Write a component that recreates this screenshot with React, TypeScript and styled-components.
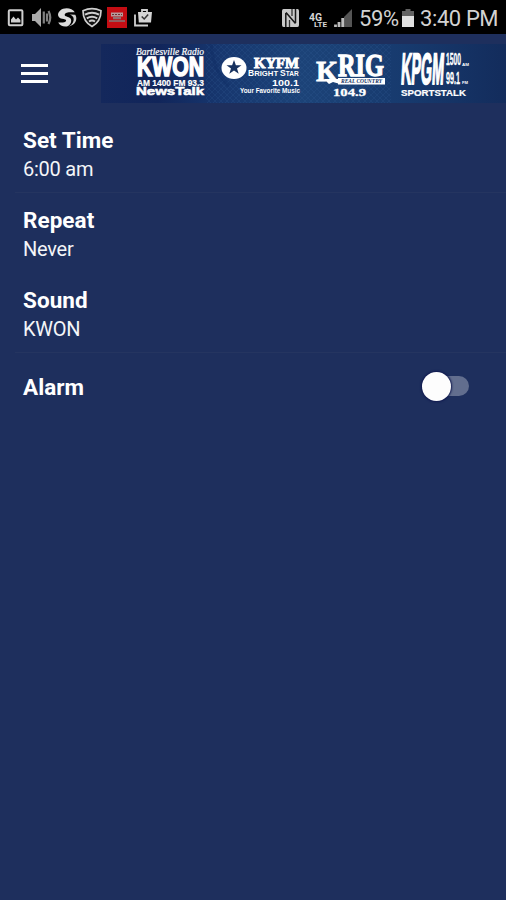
import React, { useState } from "react";
import styled, { createGlobalStyle } from "styled-components";

const GlobalStyle = createGlobalStyle`
  * { box-sizing: border-box; }
  html, body { margin: 0; padding: 0; background: #1e2f5d; }
  body { font-family: Roboto, "Liberation Sans", sans-serif; }
`;

const Screen = styled.div`
  width: 506px;
  height: 900px;
  display: flex;
  flex-direction: column;
  background: #1e2f5d;
  overflow: hidden;
`;

const StatusBar = styled.div`
  height: 34px;
  flex: none;
  display: flex;
  justify-content: space-between;
  background: #000;
  color: #d2d2d2;
`;

const StatusGroup = styled.div`
  display: flex;
  align-items: flex-start;
  padding-top: 6px;
`;

const Icon = styled.svg<{ $gap?: number }>`
  display: block;
  flex: none;
  height: 22px;
  margin-left: ${(p) => p.$gap ?? 0}px;
`;

const StatusText = styled.span<{ $width: number; $gap: number }>`
  width: ${(p) => p.$width}px;
  margin-left: ${(p) => p.$gap}px;
  font-size: 22px;
  letter-spacing: -0.4px;
  line-height: 26px;
  white-space: nowrap;
`;

const Header = styled.header`
  height: 79px;
  flex: none;
  display: flex;
  align-items: flex-start;
  padding-top: 10px;
`;

const MenuButton = styled.button`
  width: 101px;
  height: 59px;
  padding: 0 0 0 21px;
  border: 0;
  background: none;
  display: flex;
  align-items: center;
`;

const MenuLines = styled.span`
  width: 27px;
  height: 19px;
  border-top: 3px solid #fff;
  border-bottom: 3px solid #fff;
  display: flex;
  align-items: center;
  &::after {
    content: "";
    width: 100%;
    height: 3px;
    background: #fff;
  }
`;

const Banner = styled.svg`
  display: block;
  width: 405px;
  height: 59px;
`;

const List = styled.main`
  display: flex;
  flex-direction: column;
  margin-left: 15px;
`;

const Row = styled.section<{ $height: number; $divider?: boolean }>`
  height: ${(p) => p.$height}px;
  display: flex;
  justify-content: space-between;
  padding: 13px 37px 0 8px;
  border-bottom: 1px solid ${(p) => (p.$divider ? "#253560" : "transparent")};
`;

const Label = styled.div`
  font-size: 22.5px;
  line-height: 28px;
  font-weight: 700;
  letter-spacing: 0.05px;
  color: #fff;
`;

const Value = styled.div`
  margin-top: 1px;
  font-size: 20px;
  line-height: 28px;
  letter-spacing: -0.25px;
  color: #f4f5f8;
`;

const AlarmLabel = styled(Label)`
  padding-top: 7px;
`;

const Switch = styled.button<{ $on: boolean }>`
  width: 47px;
  height: 30px;
  margin-top: 5px;
  padding: 0;
  border: 0;
  display: flex;
  flex-direction: ${(p) => (p.$on ? "row-reverse" : "row")};
  align-items: center;
  background: none;
`;

const Knob = styled.span`
  width: 29px;
  height: 29px;
  flex: none;
  border-radius: 50%;
  background: #fdfdfd;
  box-shadow: 0 0 2px 1px #10194f;
  z-index: 1;
`;

const Track = styled.span`
  width: 32px;
  height: 20px;
  flex: none;
  margin: 0 -14px;
  border-radius: 10px;
  background: #626e8e;
`;

function LeftIcons() {
  return (
    <StatusGroup>
      <Icon $gap={7} width="17" viewBox="0 0 17 22">
        <rect x="1.8" y="4.3" width="13.6" height="15" rx="1" fill="none" stroke="#cfcfcf" strokeWidth="2" />
        <path d="M4 16.5v-3l2.5-3 2.5 3 2-2 2.4 2.5v2.5z" fill="#cfcfcf" />
      </Icon>
      <Icon $gap={8} width="20" viewBox="0 0 20 22">
        <path d="M0 8h3l6-6v19l-6-6H0z" fill="#ababab" />
        <path d="M11.8 5.5v12M15 7.5v8M16.5 5q3.5 6.5 0 13" fill="none" stroke="#808080" strokeWidth="2.2" />
      </Icon>
      <Icon $gap={5} width="20" viewBox="0 0 20 22">
        <path d="M17.8 6.2C15 1.8 7 1 3 4.8-.4 8.200.8 12 5 12.800c3 .5 4.500.8 4 2.200-.6 1.700-4 1.700-7.800 1.500 1.700 3.300 5.300 4.600 8.800 3.900 4-1 5.200-5.900 3.400-8.100-2-2.100-6-1.600-5.700-3.900C8 6.200 11.500 6 17.800 6.200Z" fill="#dcdcdc" />
        <path d="M12.500 8.400c4.500 1.300 5 5 3.400 8-1 1.800-2.500 3.200-4.400 4 5-.7 8-4.300 7.800-8.300-.1-1.500-.5-2.500-1-3.300Z" fill="#d1d1d1" />
      </Icon>
      <Icon $gap={5} width="20" viewBox="0 0 20 22">
        <path d="M1 4.7Q10 .5 19 4.7C19 12 15.7 17.3 10 20.5 4.3 17.3 1 12 1 4.7Z" fill="#111" stroke="#cfcfcf" strokeWidth="1.7" />
        <path d="M3 8.7q7-4 14 0M4.8 12.3q5.2-3 10.4 0M7 15.5q3-1.8 6 0" fill="none" stroke="#cfcfcf" strokeWidth="2" />
      </Icon>
      <Icon $gap={5} width="20" viewBox="0 0 20 22">
        <rect y="1" width="20" height="21" fill="#c40d13" />
        <path d="M4 6.5h12v4H4z" fill="#b79b9b" />
        <path d="M5 8.5h10" stroke="#6b3435" strokeWidth="1.1" strokeDasharray="2 1" />
        <path d="M6 12h8" stroke="#927071" strokeWidth="2.5" />
        <path d="M2 15h16" stroke="#8e6667" strokeWidth="1.8" />
      </Icon>
      <Icon $gap={7} width="18" viewBox="0 0 18 22">
        <path d="M4 6h14l-1 10.5H4.8z" fill="#d4d4d4" />
        <path d="M8 6V4h5v2M1 8.5v11h13" fill="none" stroke="#cfcfcf" strokeWidth="1.8" />
        <path d="m7.7 10.5 2.5 2.5 4-4.5" fill="none" stroke="#333" strokeWidth="1.5" />
      </Icon>
    </StatusGroup>
  );
}

function RightIcons() {
  return (
    <StatusGroup>
      <Icon width="18" viewBox="0 0 18 22">
        <path d="M1.5 3h14Q17 3 17 5v14q0 2-1.5 2h-14Q0 21 0 19V5q0-2 1.5-2Z" fill="#c9c9c9" />
        <path d="M3.8 21V7M13.5 17V3M4 6.5l9.5 11" fill="none" stroke="#181818" strokeWidth="1.5" />
        <path d="M7.5 21v-7M10 3v7" stroke="#333" strokeWidth="1.3" />
      </Icon>
      <Icon $gap={9} width="19" viewBox="0 0 19 22">
        <text x="0" y="15" fontFamily="Roboto" fontWeight="700" fontSize="11" textLength="13" lengthAdjust="spacingAndGlyphs" fill="#d5d5d5">4G</text>
        <text x="5" y="21" fontFamily="Roboto" fontWeight="700" fontSize="8" textLength="13" lengthAdjust="spacingAndGlyphs" fill="#d5d5d5">LTE</text>
      </Icon>
      <Icon $gap={6} width="18" viewBox="0 0 18 22">
        <path d="M18 3v18H10V11z" fill="#555" />
        <path d="M1.5 18.5V21M5 16v5M8.7 12v9" stroke="#bdbdbd" strokeWidth="2.8" />
      </Icon>
      <StatusText $gap={7} $width={40}>59%</StatusText>
      <Icon $gap={3} width="12" viewBox="0 0 12 22">
        <path d="M3.5 3h5v2H12v5H0V5h3.5z" fill="#626262" />
        <path d="M0 10h12v11H0z" fill="#e0e0e0" />
      </Icon>
      <StatusText $gap={6} $width={86}>3:40 PM</StatusText>
    </StatusGroup>
  );
}

interface MarkProps {
  x: number;
  y: number;
  size: number;
  width: number;
  children: string;
  family?: string;
  weight?: number;
  style?: "italic" | "normal";
  stroke?: number;
}

function Mark({ x, y, size, width, children, family = "Liberation Sans", weight = 700, style = "normal", stroke = 0 }: MarkProps) {
  return (
    <text x={x} y={y} fontSize={size} textLength={width} lengthAdjust="spacingAndGlyphs" fontFamily={family} fontWeight={weight} fontStyle={style} fill="#fff" stroke="#fff" strokeWidth={stroke}>
      {children}
    </text>
  );
}

function StationBanner() {
  return (
    <Banner viewBox="0 0 405 59">
      <defs>
        <linearGradient id="sky" x2="1">
          <stop offset="0" stopColor="#14285c" />
          <stop offset=".14" stopColor="#11255a" />
          <stop offset=".3" stopColor="#17376f" />
          <stop offset=".5" stopColor="#1c4378" />
          <stop offset=".75" stopColor="#173a6e" />
          <stop offset="1" stopColor="#132c5c" />
        </linearGradient>
        <pattern id="mesh" width="6" height="6" patternUnits="userSpaceOnUse">
          <path d="m0 3 3-3 3 3-3 3z" fill="none" stroke="#3a659b" strokeWidth=".6" opacity=".3" />
        </pattern>
      </defs>
      <rect width="405" height="59" fill="url(#sky)" />
      <rect x="105" width="185" height="59" fill="url(#mesh)" />
      <path d="M110 0q2 28 18 42" fill="none" stroke="#102e65" strokeWidth="3" opacity=".5" />
      <Mark x={35} y={10.5} size={10} width={68} family="Liberation Serif" style="italic" weight={400} stroke={0.2}>Bartlesville Radio</Mark>
      <Mark x={36} y={32} size={27} width={67} stroke={1.6}>KWON</Mark>
      <Mark x={36} y={42} size={9.5} width={67} stroke={0.2}>AM 1400 FM 93.3</Mark>
      <Mark x={35} y={51} size={10} width={68} stroke={0.5}>NewsTalk</Mark>

      <ellipse cx="133" cy="24" rx="12.5" ry="11" fill="#fff" />
      <path d="m133 16 1.9 5.2h5.6l-4.5 3.3 1.700 5.300-4.700-3.200-4.700 3.200 1.700-5.300-4.500-3.300h5.600z" fill="#17315f" />
      <Mark x={153} y={24} size={14} width={45} family="Liberation Serif" stroke={0.9}>KYFM</Mark>
      <text y="32" fontFamily="Liberation Sans" fontWeight="700" fill="#fff">
        <tspan x="147" fontSize="8.5">B</tspan><tspan fontSize="6.7" textLength="24" lengthAdjust="spacingAndGlyphs">RIGHT</tspan>
        <tspan x="179" fontSize="8.5">S</tspan><tspan fontSize="6.7" textLength="13" lengthAdjust="spacingAndGlyphs">TAR</tspan>
      </text>
      <Mark x={171} y={42} size={8.5} width={27}>100.1</Mark>
      <Mark x={139} y={48.5} size={6.3} width={60}>Your Favorite Music</Mark>

      <Mark x={215} y={37} size={30} width={22} family="Liberation Serif" stroke={0.8}>K</Mark>
      <Mark x={237} y={32} size={31} width={46} family="Liberation Serif" stroke={1.3}>RIG</Mark>
      <path d="m223 35 5 5 4-2 7 2v-5z" fill="#fff" />
      <rect x="237" y="34" width="47" height="6.5" fill="#fff" />
      <text x="240" y="39.2" fontSize="5.5" textLength="41" lengthAdjust="spacingAndGlyphs" fontFamily="Liberation Serif" fontStyle="italic" fontWeight="700" fill="#143263">REAL COUNTRY</text>
      <Mark x={232} y={51.5} size={10.5} width={33} family="Liberation Serif" stroke={0.3}>104.9</Mark>

      <g transform="translate(2.5 0) skewX(-3)">
        <Mark x={299} y={40} size={44} width={43} stroke={1.8}>KPGM</Mark>
      </g>
      <Mark x={345} y={21} size={17} width={15} stroke={0.4}>1500</Mark>
      <Mark x={345} y={40} size={17} width={14} stroke={0.4}>99.1</Mark>
      <Mark x={361} y={22} size={4} width={7}>AM</Mark>
      <Mark x={361} y={40} size={4} width={6}>FM</Mark>
      <Mark x={300} y={52} size={9} width={65} stroke={0.2}>SPORTSTALK</Mark>
    </Banner>
  );
}

const settings = [
  { label: "Set Time", value: "6:00 am", divider: true },
  { label: "Repeat", value: "Never", divider: false },
  { label: "Sound", value: "KWON", divider: true },
];

export default function App() {
  const [alarm, setAlarm] = useState(false);
  return (
    <>
      <GlobalStyle />
      <Screen>
        <StatusBar>
          <LeftIcons />
          <RightIcons />
        </StatusBar>
        <Header>
          <MenuButton aria-label="Menu"><MenuLines /></MenuButton>
          <StationBanner />
        </Header>
        <List>
          {settings.map((s) => (
            <Row key={s.label} $height={80} $divider={s.divider}>
              <div>
                <Label>{s.label}</Label>
                <Value>{s.value}</Value>
              </div>
            </Row>
          ))}
          <Row $height={68}>
            <AlarmLabel>Alarm</AlarmLabel>
            <Switch $on={alarm} role="switch" aria-checked={alarm} aria-label="Alarm" onClick={() => setAlarm(!alarm)}>
              <Knob />
              <Track />
            </Switch>
          </Row>
        </List>
      </Screen>
    </>
  );
}
